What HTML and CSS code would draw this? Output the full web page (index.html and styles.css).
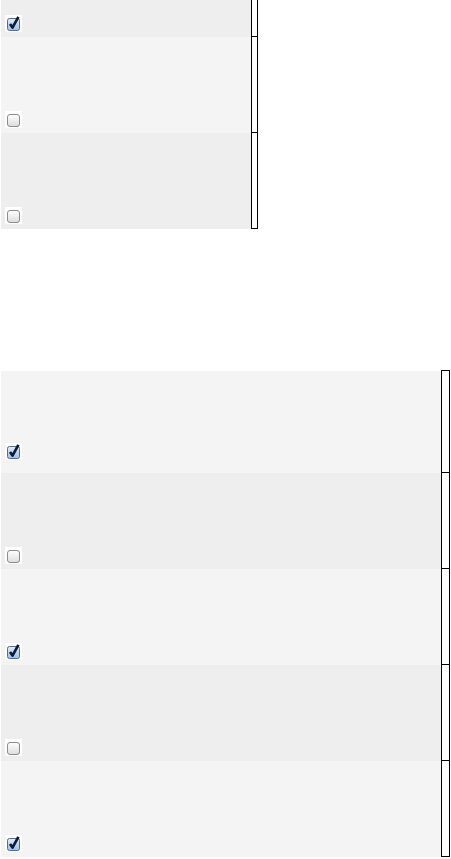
FILE: index.html
```html
<!DOCTYPE html>
<html lang="en">
<head>
    <meta charset="UTF-8">
    <meta name="viewport" content="width=device-width, initial-scale=1.0">
    <title>Checklist</title>

    <link rel="stylesheet" href="styles.css">
</head>

<body>
  <!-- checkbox pictures, drawn once and reused below -->
  <svg class="sprites" width="0" height="0" aria-hidden="true">
    <defs>
      <linearGradient id="fillOn" x1="0" y1="0" x2="0" y2="1">
        <stop offset="0" stop-color="#e3edf9"/>
        <stop offset="1" stop-color="#9fbde6"/>
      </linearGradient>
      <linearGradient id="fillOff" x1="0" y1="0" x2="0" y2="1">
        <stop offset="0" stop-color="#ffffff"/>
        <stop offset="1" stop-color="#dcdcdc"/>
      </linearGradient>
      <symbol id="cb-on" viewBox="0 0 17 17">
        <rect width="17" height="17" fill="#fff"/>
        <rect x="2.5" y="3.5" width="12" height="12" rx="2" fill="url(#fillOn)" stroke="#4f6d99"/>
        <path d="M5 9 L7.5 12.6 L13.4 1.8" fill="none" stroke="#0b1d3a" stroke-width="2.7" stroke-linejoin="round"/>
      </symbol>
      <symbol id="cb-off" viewBox="0 0 17 17">
        <rect width="17" height="17" fill="#fff"/>
        <rect x="2.5" y="3.5" width="12" height="12" rx="2.5" fill="url(#fillOff)" stroke="#8c8c8c"/>
      </symbol>
    </defs>
  </svg>

  <div class="list list-short">
    <div class="row dark">
      <div class="row-main"><svg class="check"><use href="#cb-on"/></svg></div>
      <div class="row-side"></div>
    </div>
    <div class="row light">
      <div class="row-main"><svg class="check"><use href="#cb-off"/></svg></div>
      <div class="row-side"></div>
    </div>
    <div class="row dark">
      <div class="row-main"><svg class="check"><use href="#cb-off"/></svg></div>
      <div class="row-side"></div>
    </div>
  </div>

  <div class="list list-wide">
    <div class="row light tall">
      <div class="row-main"><svg class="check"><use href="#cb-on"/></svg></div>
      <div class="row-side"></div>
    </div>
    <div class="row dark">
      <div class="row-main"><svg class="check"><use href="#cb-off"/></svg></div>
      <div class="row-side"></div>
    </div>
    <div class="row light">
      <div class="row-main"><svg class="check"><use href="#cb-on"/></svg></div>
      <div class="row-side"></div>
    </div>
    <div class="row dark">
      <div class="row-main"><svg class="check"><use href="#cb-off"/></svg></div>
      <div class="row-side"></div>
    </div>
    <div class="row light">
      <div class="row-main"><svg class="check"><use href="#cb-on"/></svg></div>
      <div class="row-side"></div>
    </div>
  </div>
</body>
</html>
```

FILE: styles.css
```css
body {
  margin: 0;
  padding: 0 1px;
  font-family: "Liberation Sans", Arial, sans-serif;
  background-color: #fff;
}

.sprites {
  display: block;
  width: 0;
  height: 0;
}

.list {
  display: flex;
  flex-direction: column;
}

/* page is scrolled a little, so the first row is cut at the top */
.list-short {
  width: 257px;
  margin-top: -59px;
}

.list-wide {
  width: 449px;
  margin-top: 142px;
}

.row {
  display: flex;
  height: 96px;
}

.row.tall {
  height: 102px;
}

.dark .row-main {
  background: #eeeeee;
}

.light .row-main {
  background: #f4f4f4;
}

.row-main {
  flex: 1;
  display: flex;
  align-items: flex-end;
  padding: 0 0 5px 4px;
}

.tall .row-main {
  padding-bottom: 13px;
}

.row-side {
  width: 5px;
  border: 1px solid #000;
  border-top: 0;
}

.list-wide .row-side {
  width: 7px;
}

/* top edge of the side column sits one pixel above the rows */
.list-wide .row:first-child .row-side {
  border-top: 1px solid #000;
  margin-top: -1px;
}

.check {
  display: block;
  width: 17px;
  height: 17px;
}
```
